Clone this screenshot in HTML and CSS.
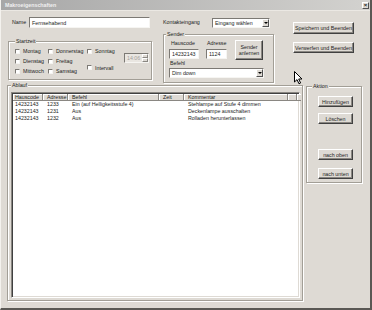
FILE: index.html
```html
<!DOCTYPE html>
<html lang="de">

<head>
    <meta charset="UTF-8">
    <title>Makroeigenschaften</title>
    <link rel="stylesheet" href="styles.css">
</head>

<body>
    <div class="window">
        <div class="titlebar">
            <span class="title">Makroeigenschaften</span>
            <span class="close">×</span>
        </div>

        <div class="top">
            <div class="col-left">
                <div class="row name-row">
                    <label>Name</label>
                    <div class="field name-field">Fernsehabend</div>
                </div>
                <div class="group startzeit">
                    <div class="group-title">Startzeit</div>
                    <div class="startzeit-body">
                        <div class="days">
                            <div class="check"><span class="box"></span>Montag</div>
                            <div class="check"><span class="box"></span>Donnerstag</div>
                            <div class="check"><span class="box"></span>Sonntag</div>
                            <div class="check"><span class="box"></span>Dienstag</div>
                            <div class="check"><span class="box"></span>Freitag</div>
                            <div></div>
                            <div class="check"><span class="box"></span>Mittwoch</div>
                            <div class="check"><span class="box"></span>Samstag</div>
                            <div class="check intervall"><span class="box"></span>Intervall</div>
                        </div>
                        <div class="spinner">
                            <span>14:06</span>
                            <span class="spin"><i></i><i></i></span>
                        </div>
                    </div>
                </div>
            </div>

            <div class="col-mid">
                <div class="row kontakt-row">
                    <label>Kontakteingang</label>
                    <div class="field combo kontakt-combo">Eingang wählen<span class="arrow"></span></div>
                </div>
                <div class="group sender">
                    <div class="group-title">Sender</div>
                    <div class="sender-body">
                        <div class="sender-top">
                            <div class="hauscode">
                                <div class="small-label">Hauscode</div>
                                <div class="field">14232143</div>
                            </div>
                            <div class="adresse">
                                <div class="small-label">Adresse</div>
                                <div class="field">1124</div>
                            </div>
                            <button class="btn anlernen">Sender<br>anlernen</button>
                        </div>
                        <div class="small-label befehl-label">Befehl</div>
                        <div class="field combo befehl-combo">Dim down<span class="arrow"></span></div>
                    </div>
                </div>
            </div>

            <div class="col-right">
                <button class="btn main-btn">Speichern und Beenden</button>
                <button class="btn main-btn second">Verwerfen und Beenden</button>
            </div>
        </div>

        <div class="bottom">
            <div class="group ablauf">
                <div class="group-title">Ablauf</div>
                <div class="ablauf-body">
                    <div class="listview">
                        <div class="lv-row lv-head">
                            <span class="first">Hauscode</span>
                            <span>Adresse</span>
                            <span>Befehl</span>
                            <span>Zeit</span>
                            <span>Kommentar</span>
                            <span></span>
                            <span class="rest"></span>
                        </div>
                        <div class="lv-row">
                            <span class="first">14232143</span>
                            <span>1233</span>
                            <span>Ein (auf Helligkeitsstufe 4)</span>
                            <span></span>
                            <span>Stehlampe auf Stufe 4 dimmen</span>
                        </div>
                        <div class="lv-row">
                            <span class="first">14232143</span>
                            <span>1231</span>
                            <span>Aus</span>
                            <span></span>
                            <span>Deckenlampe ausschalten</span>
                        </div>
                        <div class="lv-row">
                            <span class="first">14232143</span>
                            <span>1232</span>
                            <span>Aus</span>
                            <span></span>
                            <span>Rolladen herunterlassen</span>
                        </div>
                    </div>
                </div>
            </div>

            <div class="group aktion">
                <div class="group-title">Aktion</div>
                <div class="aktion-body">
                    <button class="btn side-btn">Hinzufügen</button>
                    <button class="btn side-btn loeschen">Löschen</button>
                    <button class="btn side-btn oben">nach oben</button>
                    <button class="btn side-btn unten">nach unten</button>
                </div>
            </div>
        </div>

        <svg class="cursor" width="10" height="14" viewBox="0 0 10 14">
            <path d="M0.5 0.5 L0.5 11 L3 8.6 L5 12.8 L6.6 12 L4.7 8 L8 8 Z" fill="#fff" stroke="#000" stroke-width="1" stroke-linejoin="miter" />
        </svg>
    </div>
</body>

</html>
```

FILE: styles.css
```css
* {
    box-sizing: border-box;
}

body {
    margin: 0;
    font-family: 'Liberation Sans', Arial, sans-serif;
    font-size: 5.3px;
    color: #1c1c1c;
    background: #dedad4;
}

.window {
    position: relative;
    width: 372px;
    height: 310px;
    background: #dedad4;
    border-left: 1px solid #f4f2ee;
    border-right: 2px solid #5a5854;
    border-bottom: 2px solid #5a5854;
    overflow: hidden;
}

.titlebar {
    height: 11px;
    display: flex;
    align-items: center;
    justify-content: space-between;
    padding-left: 4px;
    background: linear-gradient(to right, #a7a7a7, #d3d2cf);
    border-bottom: 1px solid #ebe8e3;

    .title {
        font-weight: bold;
        color: #f0f0f0;
    }

    .close {
        width: 7px;
        height: 7px;
        margin-right: 1px;
        display: flex;
        align-items: center;
        justify-content: center;
        font-size: 6px;
        font-weight: bold;
        line-height: 1;
        background: #dedad4;
        border: 1px solid;
        border-color: #fff #505050 #505050 #fff;
    }
}

label,
.small-label {
    line-height: 7px;
}

.field {
    display: flex;
    align-items: center;
    background: #fff;
    border: 1px solid;
    border-color: #7c7974 #f6f5f2 #f6f5f2 #7c7974;
    padding-left: 2px;
    height: 10px;
    white-space: nowrap;
}

.combo {
    position: relative;
    padding-right: 8px;

    .arrow {
        position: absolute;
        right: 0;
        top: 0;
        width: 7px;
        height: 8px;
        background: #dedad4;
        border: 1px solid;
        border-color: #fff #505050 #505050 #fff;
    }

    .arrow::after {
        content: "";
        position: absolute;
        left: 1px;
        top: 2px;
        border-left: 2px solid transparent;
        border-right: 2px solid transparent;
        border-top: 2px solid #000;
    }
}

.btn {
    margin: 0;
    padding: 0;
    font-family: inherit;
    font-size: inherit;
    line-height: 6px;
    color: #1c1c1c;
    background: #dedad4;
    border: 1px solid;
    border-color: #fff #404040 #404040 #fff;
    box-shadow: inset -1px -1px 0 #8a8782;
    text-align: center;
}

.group {
    border: 1px solid #a29e96;
    box-shadow: inset 1px 1px 0 #fff, 1px 1px 0 #fff;
}

.group-title {
    display: table;
    margin-top: -4px;
    padding: 0 1px;
    line-height: 7px;
    background: #dedad4;
}

/* top area */

.top {
    display: flex;
    align-items: flex-start;
    height: 74px;
}

.row {
    display: flex;
    align-items: center;
    height: 11px;
    margin-top: 6px;
}

.col-left {
    margin-left: 7px;
    width: 144px;

    .name-row label {
        width: 21px;
        padding-left: 4px;
    }

    .name-field {
        width: 121px;
        height: 11px;
    }
}

.startzeit {
    margin-top: 13px;
    height: 39px;

    .group-title {
        margin-left: 6px;
    }
}

.startzeit-body {
    display: flex;
    padding: 1px 0 0 6px;
}

.days {
    display: grid;
    grid-template-columns: 33px 39px 37px;
    grid-auto-rows: 10px;
    width: 109px;
}

.check {
    display: flex;
    align-items: center;
    gap: 3px;
    white-space: nowrap;

    .box {
        width: 5px;
        height: 5px;
        background: #fff;
        border: 1px solid;
        border-color: #7c7974 #f6f5f2 #f6f5f2 #7c7974;
        flex-shrink: 0;
    }
}

.intervall {
    align-self: start;
    margin-top: -2px;
    height: 7px;
}

.spinner {
    display: flex;
    align-items: center;
    justify-content: space-between;
    width: 25px;
    height: 10px;
    margin-top: 7px;
    padding-left: 2px;
    color: #a3a09b;
    background: #e9e6e1;
    border: 1px solid;
    border-color: #7c7974 #f6f5f2 #f6f5f2 #7c7974;

    .spin {
        display: flex;
        flex-direction: column;
        width: 6px;
        height: 8px;

        i {
            flex: 1;
            background: #dedad4;
            border: 1px solid;
            border-color: #fff #8a8782 #8a8782 #fff;
        }
    }
}

.col-mid {
    margin-left: 11px;
    width: 111px;

    .kontakt-row label {
        width: 49px;
    }

    .kontakt-combo {
        width: 58px;
    }
}

.sender {
    margin-top: 6px;
    height: 49px;

    .group-title {
        margin-left: 2px;
    }
}

.sender-body {
    padding: 2px 0 0 5px;
}

.sender-top {
    display: flex;
    align-items: flex-start;
    height: 20px;

    .field {
        margin-top: 2px;
    }
}

.hauscode {
    width: 30px;

    .small-label {
        padding-left: 2px;
    }
}

.adresse {
    width: 21px;
    margin-left: 7px;

    .small-label {
        padding-left: 1px;
    }
}

.anlernen {
    width: 28px;
    height: 20px;
    margin-left: 8px;
}

.befehl-label {
    padding-left: 1px;
}

.befehl-combo {
    width: 95px;
    margin-top: 1px;
}

.col-right {
    display: flex;
    flex-direction: column;
    margin-left: 19px;

    .main-btn {
        width: 61px;
        height: 12px;
        margin-top: 11px;
    }

    .second {
        height: 11px;
        margin-top: 8px;
    }
}

/* bottom area */

.bottom {
    display: flex;
    align-items: flex-start;
}

.ablauf {
    margin-left: 6px;
    width: 296px;
    height: 216px;

    .group-title {
        margin-left: 3px;
    }
}

.ablauf-body {
    padding: 3px 0 0 3px;
}

.listview {
    width: 289px;
    height: 206px;
    padding: 1px 0 0 1px;
    background: #fff;
    border: 1px solid;
    border-color: #8a8782 #fff #fff #8a8782;
    box-shadow: inset 1px 1px 0 #404040, inset -1px -1px 0 #dedad4;
}

.lv-row {
    display: grid;
    grid-template-columns: 30px 25px 91px 25px 104px 9px 1fr;
    height: 7px;
    line-height: 7px;
    margin-right: 1px;

    span {
        padding-left: 4px;
        white-space: nowrap;
        overflow: hidden;
    }

    .first {
        padding-left: 2px;
    }
}

.lv-head {
    span {
        line-height: 6px;
        background: #dedad4;
        border-right: 1px solid #8a8782;
        border-bottom: 1px solid #8a8782;
        box-shadow: inset 1px 1px 0 #fff;
    }

    .rest {
        border-right: none;
    }
}

.aktion {
    margin-left: 3px;
    margin-top: 1px;
    width: 56px;
    height: 97px;

    .group-title {
        margin-left: 5px;
    }
}

.aktion-body {
    display: flex;
    flex-direction: column;
    padding: 6px 0 0 11px;

    .side-btn {
        width: 35px;
        height: 11px;
    }

    .loeschen {
        margin-top: 6px;
    }

    .oben {
        margin-top: 25px;
    }

    .unten {
        margin-top: 8px;
    }
}

.cursor {
    position: absolute;
    left: 293px;
    top: 71px;
}
```
